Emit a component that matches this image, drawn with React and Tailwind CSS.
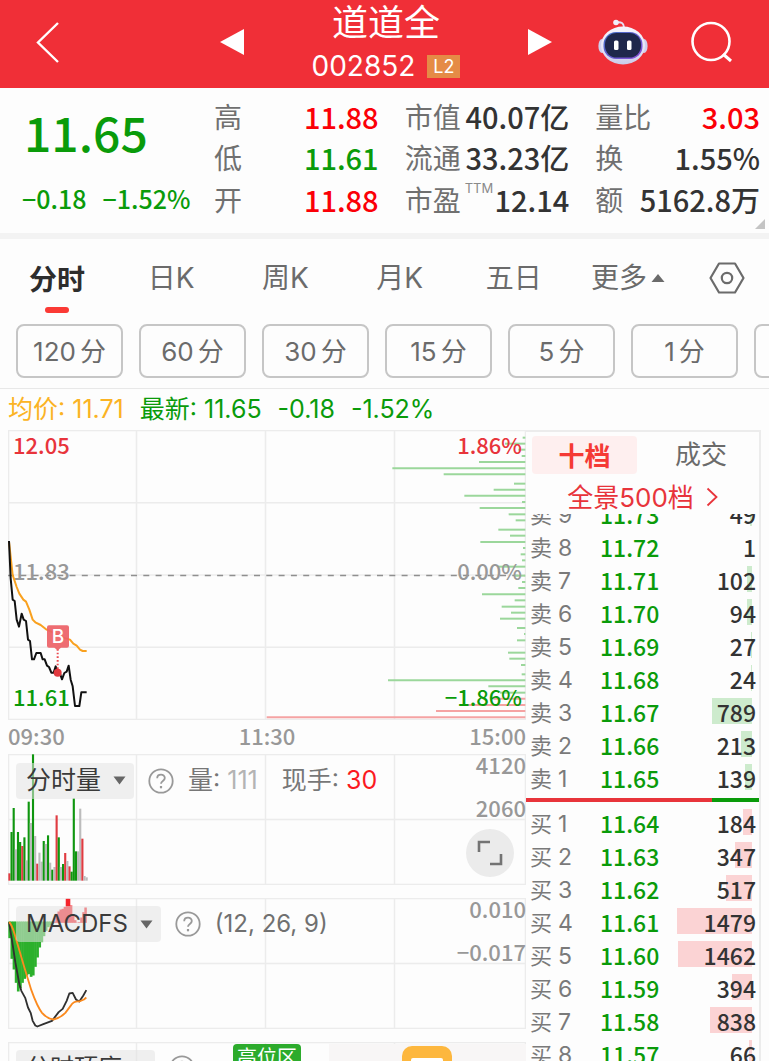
const NUM = "font-['Noto_Sans_CJK_SC',sans-serif]";
const GREEN = "text-[#0a9b0a]";
const RED = "text-[#fb0007]";

const PERIODS = ["日K", "周K", "月K", "五日"];
const MINUTES = ["120", "60", "30", "15", "5", "1"];

const SELLS = [
  [9, "11.73", 49],
  [8, "11.72", 1],
  [7, "11.71", 102],
  [6, "11.70", 94],
  [5, "11.69", 27],
  [4, "11.68", 24],
  [3, "11.67", 789],
  [2, "11.66", 213],
  [1, "11.65", 139],
];
const BUYS = [
  [1, "11.64", 184],
  [2, "11.63", 347],
  [3, "11.62", 517],
  [4, "11.61", 1479],
  [5, "11.60", 1462],
  [6, "11.59", 394],
  [7, "11.58", 838],
  [8, "11.57", 66],
];

// Price distribution: [y, length], in thirds of a pixel
const DEPTH_GREEN = [
  [38, 8], [56, 61], [74, 21], [93, 11], [111, 139], [130, 399], [148, 245], [176, 34],
  [194, 95], [212, 183], [231, 10], [249, 137], [268, 50], [286, 29], [314, 81], [332, 46],
  [351, 135], [369, 7], [388, 14], [406, 10], [425, 82], [452, 31], [471, 10], [489, 21],
  [508, 130], [526, 32], [545, 71], [563, 43], [581, 76], [609, 25], [627, 4], [646, 25],
  [683, 52], [701, 48], [720, 13], [748, 11], [766, 412], [784, 111], [803, 76],
];
const DEPTH_RED = [[821, 96], [840, 181], [858, 268], [877, 776]];

// Minute volume: [colour, top]
const VOLUME = [
  ["r", 385], ["g", 261], ["g", 189], ["x", 313], ["g", 261], ["g", 291], ["r", 303],
  ["g", 277], ["x", 346], ["g", 170], ["x", 234], ["g", 28], ["x", 273], ["r", 356],
  ["x", 323], ["x", 350], ["g", 288], ["x", 297], ["g", 271], ["x", 353], ["g", 374],
  ["x", 366], ["r", 211], ["g", 277], ["x", 366], ["g", 357], ["r", 324], ["x", 348],
  ["r", 364], ["g", 380], ["g", 160], ["g", 319], ["x", 319], ["x", 191], ["r", 281],
  ["x", 393], ["x", 397],
];
const VOLUME_FILL = { r: "#e03c42", g: "#0f960f", x: "#bcbcbc" };

const MACD_GREEN = [
  578, 640, 672, 712, 738, 728, 712, 700, 690, 686, 694, 690, 664, 636, 606, 590, 572, 556, 545, 540, 535,
];
const MACD_RED = [528, 505, 498, 492, 490, 484, 460, 460, 480, 508, 524, 531, 530, 516, 500, 486];

function Grid({ rows, height }) {
  const ys = Array.from({ length: rows + 1 }, (_, i) => (i * (height - 1)) / rows + 0.5);
  return (
    <g stroke="#ececec" strokeWidth="1.5" fill="none">
      {ys.map((y) => (
        <path key={y} d={`M0 ${y}H518`} />
      ))}
      {[0.5, 128.5, 257.5, 386.5, 517.5].map((x) => (
        <path key={x} d={`M${x} 0V${height}`} />
      ))}
    </g>
  );
}

function Header() {
  return (
    <header className="flex h-[88px] shrink-0 items-center bg-[#f02f37] pb-1 text-white">
      <button aria-label="返回" className="flex w-24 items-center justify-center">
        <svg width="24" height="44" viewBox="0 0 24 44" fill="none" stroke="currentColor" strokeWidth="2.4">
          <path d="M22 3 2 22.500 22 42" />
        </svg>
      </button>
      <div className="flex flex-1 items-center justify-between pl-[124px] pr-[46px]">
        <button aria-label="上一只">
          <svg width="24" height="26" viewBox="0 0 24 26" fill="currentColor">
            <path d="M0 13 24 0v26z" />
          </svg>
        </button>
        <div className="flex flex-col items-center gap-2">
          <h1 className="font-['Noto_Sans_CJK_SC',sans-serif] text-[36px] leading-[40px]">道道全</h1>
          <div className="flex items-center gap-3 leading-9">
            <span className="font-[Inter,sans-serif] text-[28px]">002852</span>
            <span className="bg-[#e58b46] px-1.5 font-[Inter,sans-serif] text-[18px] leading-[23px]">L2</span>
          </div>
        </div>
        <button aria-label="下一只">
          <svg width="24" height="26" viewBox="0 0 24 26" fill="currentColor">
            <path d="M24 13 0 0v26z" />
          </svg>
        </button>
      </div>
      <div className="flex items-center gap-[43px] pr-9">
        <button aria-label="智能助手">
          <Robot />
        </button>
        <button aria-label="搜索">
          <svg width="42" height="42" viewBox="0 0 42 42" fill="none" stroke="currentColor" strokeWidth="2.6">
            <circle cx="20" cy="20.500" r="18.500" />
            <path d="m32 33 8 7" strokeWidth="3" />
          </svg>
        </button>
      </div>
    </header>
  );
}

function Robot() {
  return (
    <svg width="50" height="46" viewBox="0 0 50 46">
      <defs>
        <linearGradient id="shell" x1="0" y1="0" x2="0" y2="1">
          <stop offset="0" stopColor="#f7f5fd" />
          <stop offset=".6" stopColor="#e6e4f6" />
          <stop offset="1" stopColor="#c9cbe9" />
        </linearGradient>
        <linearGradient id="visor" x1="0" y1="0" x2="1" y2="1">
          <stop offset="0" stopColor="#3f6fc4" />
          <stop offset="1" stopColor="#8a4fd8" />
        </linearGradient>
      </defs>
      <path d="M18 3.500q8-1.500 8 5" stroke="#e4def5" strokeWidth="2" fill="none" />
      <circle cx="18" cy="3.500" r="2.800" fill="#f1eefb" />
      <ellipse cx="4" cy="27" rx="3.600" ry="7" fill="#cfd0ee" />
      <ellipse cx="46" cy="27" rx="3.600" ry="7" fill="#cfd0ee" />
      <ellipse cx="25" cy="26.500" rx="22" ry="19" fill="url(#shell)" />
      <rect x="5.500" y="13" width="39" height="27" rx="12.500" fill="url(#visor)" />
      <rect x="7" y="14" width="36" height="24.500" rx="11.500" fill="#1f274b" />
      <rect x="16" y="21.500" width="4.500" height="9.500" rx="1.500" fill="#fff" />
      <rect x="29" y="21.500" width="4.500" height="9.500" rx="1.500" fill="#fff" />
    </svg>
  );
}

function Stat({ label, sup, value, tone }) {
  return (
    <div className="flex min-w-0 items-center justify-between whitespace-nowrap">
      <dt className="flex text-[28px] text-[#707070]">
        {label}
        {sup && <sup className="top-0 ml-1 font-[Inter,sans-serif] text-[13px] leading-[18px] text-[#8a8a8a]">{sup}</sup>}
      </dt>
      <dd className={`text-[29px] font-medium ${tone || "text-[#333]"}`}>{value}</dd>
    </div>
  );
}

function Quote() {
  return (
    <section className={`relative flex h-[145px] shrink-0 pr-[9px] ${NUM}`}>
      <div className={`w-[214px] shrink-0 ${GREEN}`}>
        <p className="pl-6 pt-4 text-[48px] font-medium leading-[54px]">11.65</p>
        <p className="flex gap-4 pl-[22px] pt-6 text-[25px] font-medium leading-[32px]">
          <span>−0.18</span>
          <span>−1.52%</span>
        </p>
      </div>
      <dl className="grid min-w-0 flex-1 grid-cols-3 grid-rows-3 gap-x-[26px] pb-[13px] pt-2 leading-[41px]">
        <Stat label="高" value="11.88" tone={RED} />
        <Stat label="市值" value="40.07亿" />
        <Stat label="量比" value="3.03" tone={RED} />
        <Stat label="低" value="11.61" tone={GREEN} />
        <Stat label="流通" value="33.23亿" />
        <Stat label="换" value="1.55%" />
        <Stat label="开" value="11.88" tone={RED} />
        <Stat label="市盈" sup="TTM" value="12.14" />
        <Stat label="额" value="5162.8万" />
      </dl>
      <svg className="absolute bottom-1 right-1" width="10" height="10" viewBox="0 0 10 10" fill="#c4c4c4">
        <path d="M10 0v10H0z" />
      </svg>
    </section>
  );
}

function Tabs() {
  return (
    <nav className="shrink-0 border-b border-[#e8e8e8] border-t-[6px] border-t-[#f3f3f3] font-[Inter,'Noto_Sans_CJK_SC',sans-serif] text-[#6b6b6b]">
      <div className="mb-2 flex h-[77px] items-center text-[28px]">
        <div className="grid flex-1 grid-cols-6">
          <button className="relative font-['Noto_Sans_CJK_SC',sans-serif] font-bold text-[#2d2d2d]">
            分时
            <span className="absolute -bottom-3.5 left-1/2 h-1.5 w-6 -translate-x-1/2 rounded-full bg-[#fb3a35]" />
          </button>
          {PERIODS.map((p) => (
            <button key={p}>{p}</button>
          ))}
          <button className="flex items-center justify-center gap-1">
            更多
            <svg width="14" height="10" viewBox="0 0 14 10" fill="currentColor">
              <path d="M7 1 13.500 9H.5z" />
            </svg>
          </button>
        </div>
        <button aria-label="设置" className="flex w-[84px] justify-center">
          <svg width="36" height="32" viewBox="0 0 36 32" fill="none" stroke="currentColor" strokeWidth="2.2" strokeLinejoin="round">
            <path d="M10 1.500h16L34.500 16 26 30.500H10L1.500 16z" />
            <circle cx="18" cy="16" r="5.200" />
          </svg>
        </button>
      </div>
      <div className="flex gap-4 overflow-hidden pb-2.5 pl-4 text-[26px]">
        {MINUTES.map((m) => (
          <button key={m} className="flex h-[54px] w-[107px] shrink-0 items-center justify-center gap-1 rounded-lg border-2 border-[#c6c6c6]">
            <span>{m}</span>
            <span>分</span>
          </button>
        ))}
        <button aria-label="更多周期" className="h-[54px] w-[107px] shrink-0 rounded-lg border-2 border-[#c6c6c6]" />
      </div>
    </nav>
  );
}

function PriceChart() {
  return (
    <div className={`relative text-[22px] font-medium leading-6 ${NUM}`}>
      <svg className="block h-[290px] w-full" viewBox="0 0 518 290" preserveAspectRatio="none">
        <Grid rows={4} height={290} />
        <path d="M0 145.500H517" stroke="#8f8f8f" strokeWidth="1.5" strokeDasharray="6 6.300" />
        <g transform="translate(252 -5) scale(.33333)" strokeWidth="6">
          {DEPTH_GREEN.map(([y, l]) => (
            <path key={y} d={`M796 ${y}h${-l}`} stroke="#9bd79b" />
          ))}
          {DEPTH_RED.map(([y, l]) => (
            <path key={y} d={`M796 ${y}h${-l}`} stroke="#f5a3a3" />
          ))}
        </g>
      </svg>
      <span className="absolute left-[5px] top-0.5 text-[#e8343b]">12.05</span>
      <span className="absolute right-1 top-0.5 text-[#e8343b]">1.86%</span>
      <span className="absolute left-[5px] top-32 text-[#989898]">11.83</span>
      <span className="absolute right-1 top-32 text-[#989898]">0.00%</span>
      <span className={`absolute bottom-3 left-[5px] ${GREEN}`}>11.61</span>
      <span className={`absolute bottom-3 right-1 ${GREEN}`}>−1.86%</span>
      <svg className="absolute inset-0 h-full w-full" viewBox="0 0 518 290" preserveAspectRatio="none">
        <g transform="translate(-8 -5) scale(.33333)" fill="none" strokeWidth="6" strokeLinejoin="round">
          <path
            stroke="#f9a11f"
            d="M27 350 38 450 50 486 58 506 70 524 78 530 88 554 98 584 106 592 122 600 140 614 158 622 190 638 210 644 220 656 230 662 240 674 248 678H260"
          />
          <path
            stroke="#111"
            d="M27 348 32 460 38 524 44 528 50 584 57 605 65 566 71 584 78 588 84 644 90 648 96 703H102L109 684H122L128 703H134L141 722 147 726 154 743H161L167 724 173 743 180 746 186 763 193 744 200 740 206 722 212 764 218 784 225 843H238L244 802H260"
          />
          <path stroke="#ea4a50" strokeDasharray="5 6" d="M173 672V736" />
          <circle cx="173" cy="743" r="12" fill="#e0393f" />
          <path fill="#ed6267" fillOpacity=".93" d="M147 601h54q6 0 6 6v55q0 6-6 6h-18l-10 8-10-8h-16q-6 0-6-6v-55q0-6 6-6z" />
        </g>
      </svg>
      <span className="absolute left-[39px] top-[195px] w-[22px] text-center font-[Inter,sans-serif] text-[19px] text-white">B</span>
    </div>
  );
}

function Picker({ children }) {
  return (
    <button className="flex h-9 items-center gap-3 rounded bg-[#e4e4e4]/55 pl-2.5 pr-2 text-[#3a3a3a]">
      {children}
      <svg width="13" height="9" viewBox="0 0 13 9" fill="#666">
        <path d="M.5.5h12L6.500 8.500z" />
      </svg>
    </button>
  );
}

function Help() {
  return (
    <button aria-label="说明">
      <svg width="26" height="26" viewBox="0 0 26 26" fill="none" stroke="#999" strokeWidth="1.8">
        <circle cx="13" cy="13" r="11.700" />
        <path d="M9.200 10.200C9.200 5.500 16.800 5.600 16.800 10c0 3-3.800 3-3.800 5.800" />
        <path d="M13 18v2.300" strokeWidth="2.2" />
      </svg>
    </button>
  );
}

function Scale({ top, bottom }) {
  return (
    <div className={`absolute right-0 top-0 flex flex-col items-end gap-[23px] text-[22px] font-medium leading-5 text-[#989898] ${NUM}`}>
      <span>{top}</span>
      <span>{bottom}</span>
    </div>
  );
}

function VolumePanel() {
  return (
    <div className="relative">
      <svg className="block h-[131px] w-full" viewBox="0 0 518 131" preserveAspectRatio="none">
        <Grid rows={2} height={131} />
        <g transform="translate(-8 -9) scale(.33333)">
          {VOLUME.map(([c, top], i) => (
            <rect key={i} x={25 + i * 6.44} y={top} width="6.4" height={407 - top} fill={VOLUME_FILL[c]} />
          ))}
        </g>
      </svg>
      <div className="absolute left-2 top-2 flex items-center whitespace-nowrap text-[25px] text-[#777]">
        <Picker>分时量</Picker>
        <span className="ml-3.5 flex"><Help /></span>
        <span className="ml-3.5">量: <span className="text-[#b4b4b4]">111</span></span>
        <span className="ml-6">现手: <span className="text-[#fb1a1f]">30</span></span>
      </div>
      <Scale top="4120" bottom="2060" />
      <button aria-label="全屏" className="absolute bottom-2 right-3 flex size-12 items-center justify-center rounded-full bg-[#ebebeb]">
        <svg width="26" height="26" viewBox="0 0 26 26" fill="none" stroke="#737373" strokeWidth="2.6">
          <path d="M2 12V2h11M24 14v10H13" />
        </svg>
      </button>
    </div>
  );
}

function MacdPanel() {
  return (
    <div className="relative">
      <svg className="block h-[131px] w-full" viewBox="0 0 518 131" preserveAspectRatio="none">
        <Grid rows={2} height={131} />
        <g transform="translate(-8 -152.500) scale(.33333)" fill="none" strokeWidth="5.5" strokeLinejoin="round">
          {MACD_GREEN.map((y, i) => (
            <rect key={i} x={25 + i * 6.44} y="528" width="8" height={y - 528} fill="#2cb02c" />
          ))}
          {MACD_RED.map((y, i) => (
            <rect key={i} x={160 + i * 6.2} y={y} width="7.5" height={532 - y} fill="#f5242c" />
          ))}
          <path
            stroke="#303030"
            d="M27 530 34 572 46 650 58 716 64 736 76 758 84 786 92 802 98 826 106 840 112 843 130 836 156 826 176 800 188 790 200 766 208 744 218 742 228 762 238 768 250 750 259 734"
          />
          <path
            stroke="#fb8a1e"
            d="M27 530Q34 534 44 566L72 662 94 734Q112 784 126 802 142 820 160 822 180 818 196 802L214 778Q222 766 238 768L252 762 259 756"
          />
        </g>
      </svg>
      <div className="absolute left-2 top-2 flex items-center whitespace-nowrap text-[24px] text-[#707070]">
        <Picker>MACDFS</Picker>
        <span className="ml-3.5 flex"><Help /></span>
        <span className="ml-3.5">(12, 26, 9)</span>
      </div>
      <Scale top="0.010" bottom="−0.017" />
    </div>
  );
}

function StrengthPanel() {
  return (
    <div className="relative">
      <svg className="block h-[131px] w-full" viewBox="0 0 518 131" preserveAspectRatio="none">
        <Grid rows={2} height={131} />
      </svg>
      <div className="absolute bottom-0 right-0 top-0.5 w-[197px] bg-[#f8f6f6] pl-[73px] pt-0.5">
        <svg width="50" height="50" viewBox="0 0 50 50">
          <rect width="50" height="50" rx="10" fill="#fdb73e" />
          <rect x="9" y="12" width="32" height="28" rx="2" fill="#fff" />
        </svg>
      </div>
      <div className="absolute left-2 top-2 flex items-center whitespace-nowrap text-[24px]">
        <Picker>分时顶底</Picker>
        <span className="ml-3.5 flex"><Help /></span>
      </div>
      <span className="absolute left-[225px] top-0.5 rounded bg-[#2cab2c] px-1 text-[20px] leading-7 text-white">高位区</span>
    </div>
  );
}

function Levels({ side, rows, bar }) {
  return (
    <table className="w-full border-collapse text-[23px] leading-[28px]">
      <tbody>
        {rows.map(([n, price, vol]) => (
          <tr key={n} className="h-[33px]">
            <th scope="row" className="w-[68px] p-0 pl-1 font-[Inter,'Noto_Sans_CJK_SC',sans-serif] font-normal text-[#7a7a7a]">
              <span className="flex items-center gap-1.5 whitespace-nowrap pt-0.5">
                <span className="text-[22px]">{side}</span>
                <span>{n}</span>
              </span>
            </th>
            <td className={`p-0 pl-1.5 text-left align-middle font-medium ${NUM} ${GREEN}`}>{price}</td>
            <td className={`relative p-0 pr-[3px] text-right align-middle font-medium text-[#333] ${NUM}`}>
              <span className={`absolute right-[7px] top-[3px] h-[26px] ${bar}`} style={{ width: vol * 0.0504 }} />
              <span className="relative">{vol}</span>
            </td>
          </tr>
        ))}
      </tbody>
    </table>
  );
}

function OrderBook() {
  return (
    <aside className="flex min-h-0 flex-col overflow-hidden border-r-2 border-t-2 border-[#ececec] font-[Inter,'Noto_Sans_CJK_SC',sans-serif]">
      <div className="flex shrink-0 gap-1.5 pl-1.5 pt-1 text-[26px] leading-[38px]">
        <button className="w-[105px] rounded bg-[#feefef] font-['Noto_Sans_CJK_SC',sans-serif] font-bold text-[#f53a35]">十档</button>
        <button className="flex-1 text-[#6b6b6b]">成交</button>
      </div>
      <a href="#levels" className="flex h-10 shrink-0 items-center justify-center gap-3 pt-1.5 text-[26px] text-[#e8343b]">
        全景500档
        <svg width="12" height="20" viewBox="0 0 12 20" fill="none" stroke="currentColor" strokeWidth="1.8">
          <path d="m1.500 1.500 9 8.500-9 8.500" />
        </svg>
      </a>
      <div className="flex h-[284px] shrink-0 flex-col justify-end overflow-hidden pb-1">
        <Levels side="卖" rows={SELLS} bar="bg-[#cdebcd]" />
      </div>
      <div className="flex h-1 shrink-0">
        <span className="w-4/5 bg-[#e8343b]" />
        <span className="flex-1 bg-[#0a9b0a]" />
      </div>
      <div className="pt-1">
        <Levels side="买" rows={BUYS} bar="bg-[#fbd3d4]" />
      </div>
    </aside>
  );
}

export default function App() {
  return (
    <div className="flex h-screen flex-col overflow-hidden bg-[#fdfdfd] font-[Inter,'Noto_Sans_CJK_SC',sans-serif]">
      <Header />
      <Quote />
      <Tabs />
      <p className={`flex h-[41px] shrink-0 items-center gap-4 whitespace-nowrap pl-2 text-[25px] ${GREEN}`}>
        <span className="text-[#fbb324]">均价: 11.71</span>
        <span>最新: 11.65</span>
        <span>-0.18</span>
        <span>-1.52%</span>
      </p>
      <main className="grid min-h-0 flex-1 grid-cols-[518fr_235fr] px-2">
        <div className="flex min-h-0 flex-col overflow-hidden">
          <PriceChart />
          <div className={`flex h-[34px] shrink-0 items-center justify-between pb-1 text-[22px] font-medium text-[#989898] ${NUM}`}>
            <span>09:30</span>
            <span>11:30</span>
            <span>15:00</span>
          </div>
          <div className="flex flex-col gap-[13px]">
            <VolumePanel />
            <MacdPanel />
            <StrengthPanel />
          </div>
        </div>
        <OrderBook />
      </main>
    </div>
  );
}
